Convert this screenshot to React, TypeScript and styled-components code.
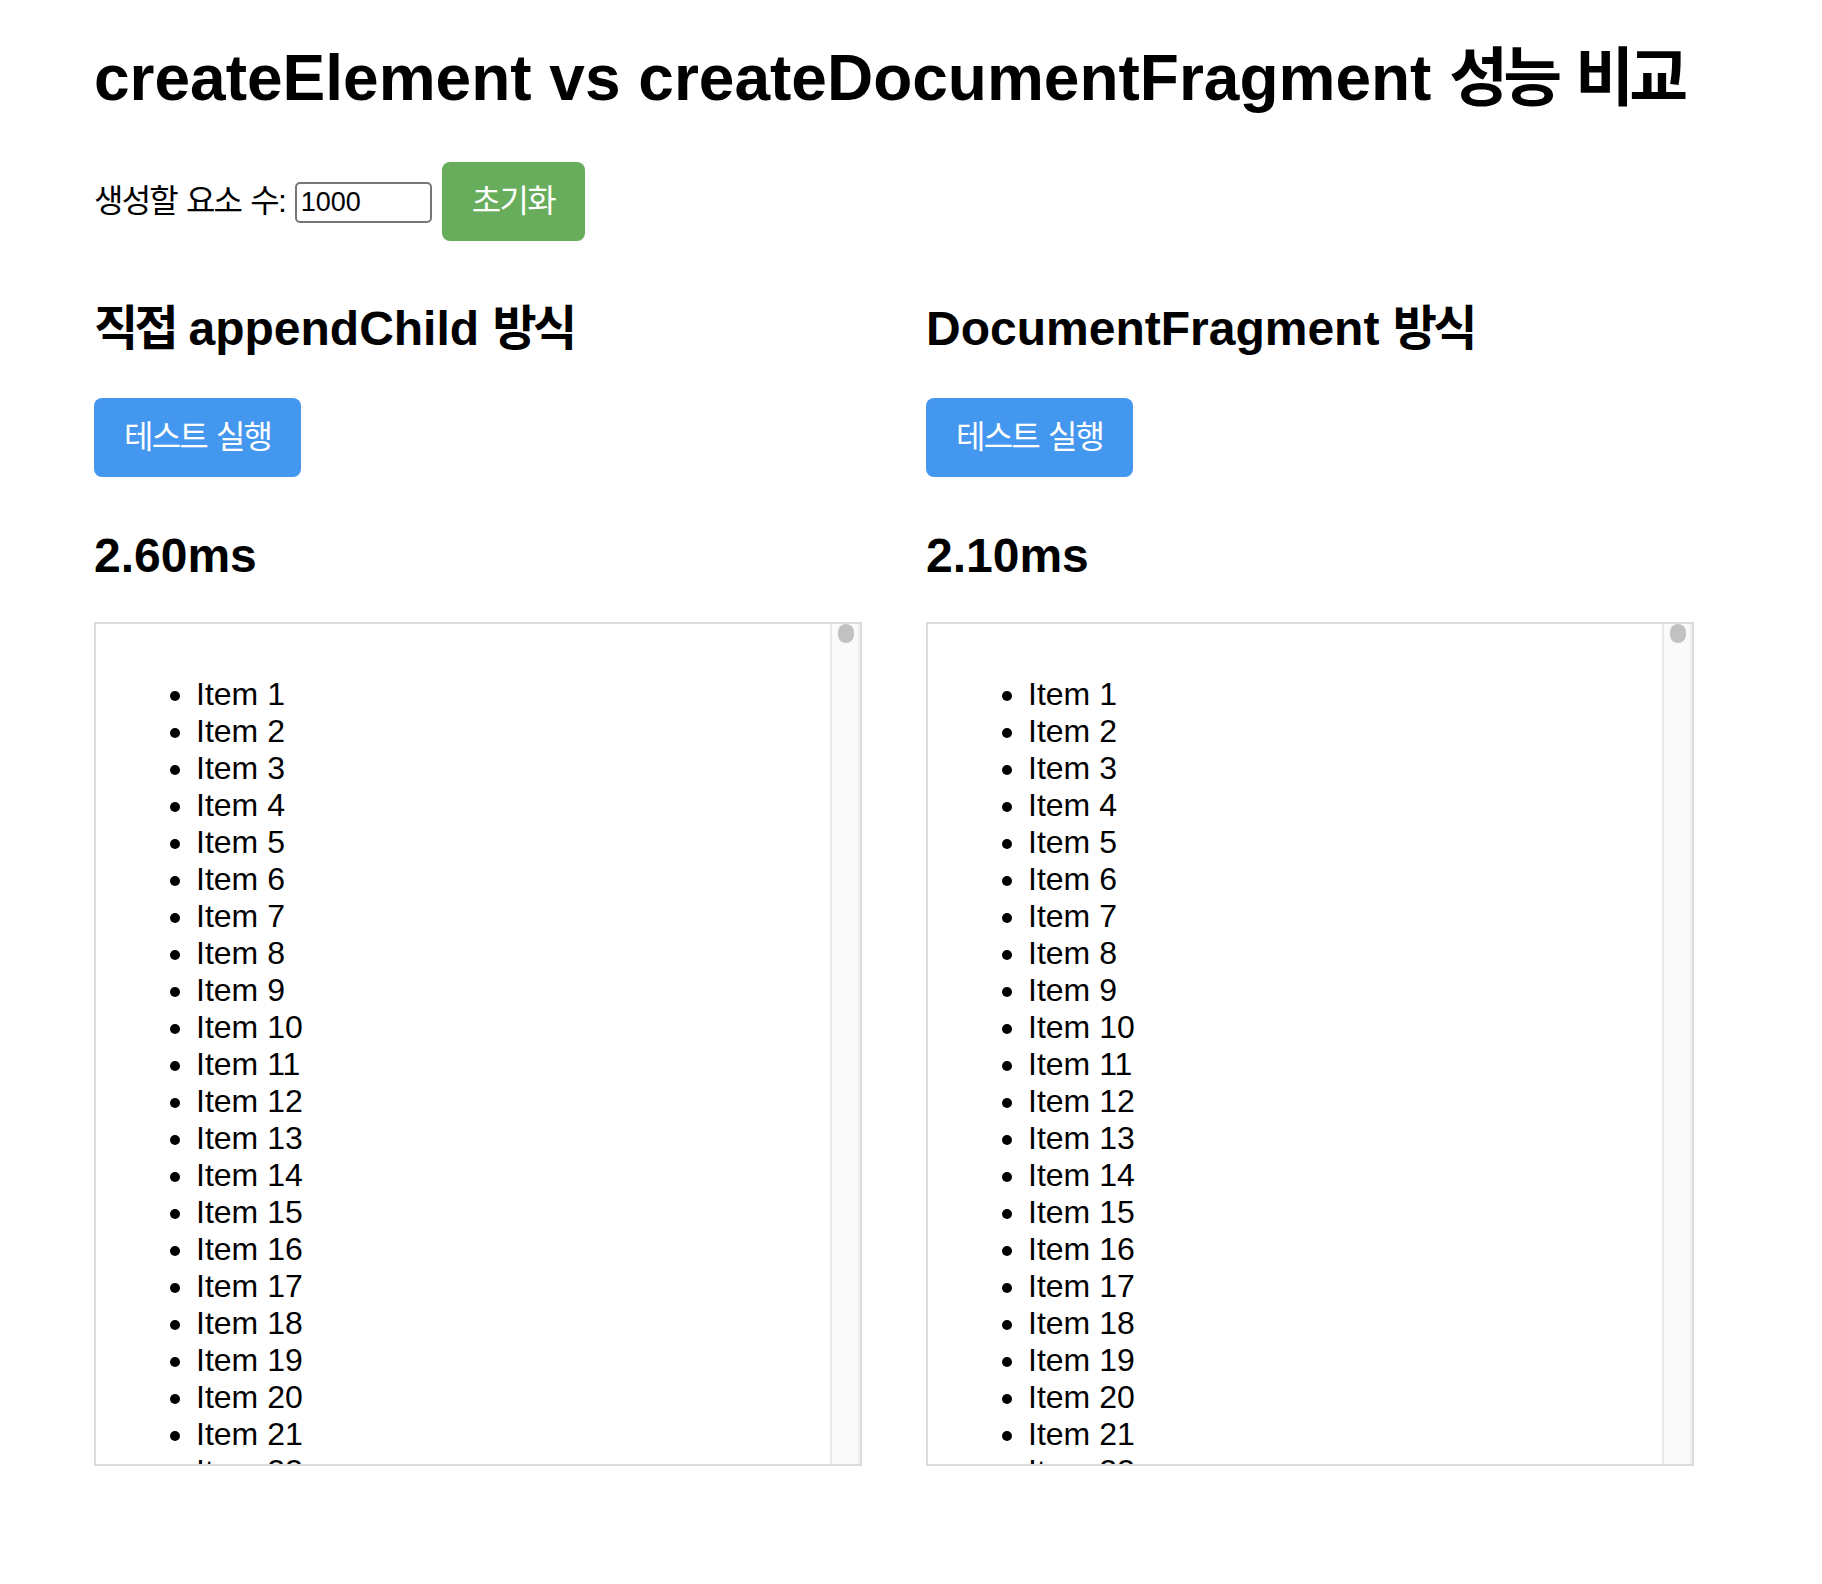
import React from "react";
import styled, { createGlobalStyle } from "styled-components";

const Global = createGlobalStyle`
  html, body { margin: 0; padding: 0; background: #ffffff; }
  body {
    font-family: "Liberation Sans", Arial, "Noto Sans CJK KR", sans-serif;
    color: #000000;
  }
`;

const Page = styled.div`
  width: 1601px;
  padding: 42px 0 80px 94px;
`;

const Title = styled.h1`
  margin: 0;
  font-size: 64px;
  line-height: 73px;
  font-weight: 700;
  white-space: nowrap;
`;

const Ko = styled.span<{ $bold?: boolean }>`
  font-family: "Noto Sans CJK KR", sans-serif;
  line-height: 0;
  letter-spacing: ${(p) => (p.$bold ? "-0.075em" : "-0.055em")};
`;

const Controls = styled.div`
  margin-top: 47px;
  display: flex;
  align-items: center;
  height: 79px;
`;

const Label = styled.label`
  font-size: 32px;
  line-height: 37px;
  margin-right: 8px;
  white-space: nowrap;
`;

const CountInput = styled.input`
  box-sizing: border-box;
  width: 137px;
  height: 41px;
  margin: 2px 10px 0 0;
  padding: 2px 4px;
  border: 2px solid #767676;
  border-radius: 5px;
  font-family: "Liberation Sans", Arial, sans-serif;
  font-size: 27px;
  color: #000;
  background: #fff;
  outline: none;
`;

const ActionButton = styled.button<{ $color: string }>`
  box-sizing: border-box;
  height: 79px;
  padding: 0 30px;
  border: none;
  border-radius: 8px;
  background: ${(p) => p.$color};
  color: #ffffff;
  font-family: "Liberation Sans", Arial, "Noto Sans CJK KR", sans-serif;
  font-size: 32px;
  line-height: 39px;
  cursor: pointer;
  white-space: nowrap;
`;

const Columns = styled.div`
  margin-top: 60px;
  display: grid;
  grid-template-columns: 768px 768px;
  column-gap: 64px;
`;

const Column = styled.section`
  display: flex;
  flex-direction: column;
  align-items: flex-start;
`;

const SectionTitle = styled.h2`
  margin: 0;
  font-size: 48px;
  line-height: 55px;
  font-weight: 700;
  white-space: nowrap;
`;

const RunButton = styled(ActionButton)`
  margin-top: 42px;
`;

const Result = styled.div`
  margin-top: 51px;
  font-size: 48px;
  line-height: 55px;
  font-weight: 700;
`;

const ListBox = styled.div`
  box-sizing: border-box;
  margin-top: 39px;
  width: 768px;
  height: 844px;
  border: 2px solid #dddddd;
  display: flex;
  overflow: hidden;
`;

const ListViewport = styled.div`
  flex: 1;
  padding: 20px;
  overflow: hidden;
`;

const ScrollTrack = styled.div`
  box-sizing: border-box;
  width: 30px;
  flex: none;
  background: #fafafa;
  border-left: 2px solid #e8e8e8;
  border-right: 2px solid #eeeeee;
  padding-left: 6px;
`;

const ScrollThumb = styled.div`
  width: 16px;
  height: 19px;
  border-radius: 8px;
  background: #c1c1c1;
`;

const ItemList = styled.ul`
  margin: 32px 0;
  padding-left: 80px;
  list-style: disc;
`;

const Item = styled.li`
  font-size: 32px;
  line-height: 37px;
`;

const visibleItems = Array.from({ length: 22 }, (_, i) => `Item ${i + 1}`);

const Panel: React.FC<{ title: React.ReactNode; time: string }> = ({ title, time }) => (
  <Column>
    <SectionTitle>{title}</SectionTitle>
    <RunButton $color="#4497ef">
      <Ko>테스트</Ko> <Ko>실행</Ko>
    </RunButton>
    <Result>{time}</Result>
    <ListBox>
      <ListViewport>
        <ItemList>
          {visibleItems.map((t) => (
            <Item key={t}>{t}</Item>
          ))}
        </ItemList>
      </ListViewport>
      <ScrollTrack>
        <ScrollThumb />
      </ScrollTrack>
    </ListBox>
  </Column>
);

export default function App() {
  return (
    <>
      <Global />
      <Page>
        <Title>
          createElement vs createDocumentFragment <Ko $bold>성능</Ko> <Ko $bold>비교</Ko>
        </Title>
        <Controls>
          <Label>
            <Ko>생성할</Ko> <Ko>요소</Ko> <Ko>수</Ko>:
          </Label>
          <CountInput type="number" defaultValue={1000} />
          <ActionButton $color="#67ad5b">
            <Ko>초기화</Ko>
          </ActionButton>
        </Controls>
        <Columns>
          <Panel
            title={
              <>
                <Ko $bold>직접</Ko> appendChild <Ko $bold>방식</Ko>
              </>
            }
            time="2.60ms"
          />
          <Panel
            title={
              <>
                DocumentFragment <Ko $bold>방식</Ko>
              </>
            }
            time="2.10ms"
          />
        </Columns>
      </Page>
    </>
  );
}
